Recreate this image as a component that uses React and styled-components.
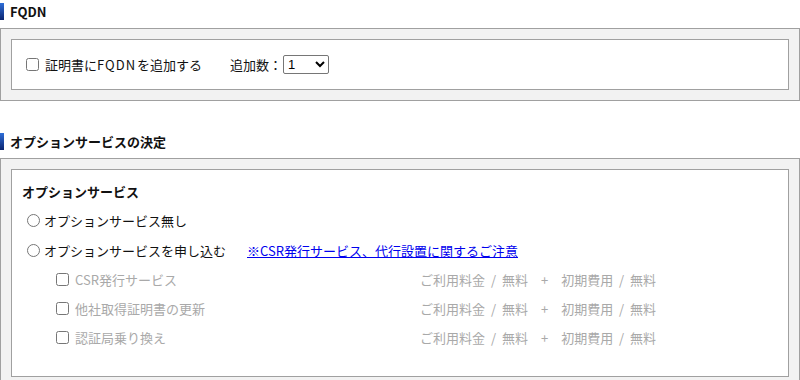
import styled, { createGlobalStyle } from 'styled-components'

const GlobalStyle = createGlobalStyle`
  body {
    margin: 0;
    background: #fff;
    font-family: "Noto Sans CJK JP", "Noto Sans", sans-serif;
    font-size: 13px;
    color: #111;
  }
`;

const fees = [
  'CSR発行サービス',
  '他社取得証明書の更新',
  '認証局乗り換え',
];

function App() {
  return (
    <Page>
      <GlobalStyle />
      <Section>
        <Heading>FQDN</Heading>
        <OuterBox>
          <InnerBox>
            <InlineRow>
              <CheckLabel>
                <Check type="checkbox" />
                <span>証明書に<Latin>FQDN</Latin>を追加する</span>
              </CheckLabel>
              <CountLabel>追加数：</CountLabel>
              <Select defaultValue="1">
                <option>1</option>
                <option>2</option>
                <option>3</option>
              </Select>
            </InlineRow>
          </InnerBox>
        </OuterBox>
      </Section>

      <Section $gap>
        <Heading>オプションサービスの決定</Heading>
        <OuterBox>
          <InnerBox $tall>
            <BoxTitle>オプションサービス</BoxTitle>
            <RadioRow>
              <Radio type="radio" name="opt" />オプションサービス無し
            </RadioRow>
            <RadioRow>
              <Radio type="radio" name="opt" />オプションサービスを申し込む
              <Notice href="#">※CSR発行サービス、代行設置に関するご注意</Notice>
            </RadioRow>
            {fees.map((name) => (
              <SubRow key={name}>
                <CheckLabel $width="368px">
                  <Check type="checkbox" />
                  <span>{name}</span>
                </CheckLabel>
                <Fee>ご利用料金 / 無料</Fee>
                <Plus>+</Plus>
                <Fee>初期費用 / 無料</Fee>
              </SubRow>
            ))}
          </InnerBox>
        </OuterBox>
      </Section>
    </Page>
  )
}

export default App

const Page = styled.div`
  width: 800px;
`;
const Section = styled.section`
  margin-top: ${(p) => (p.$gap ? '29px' : '0')};
`;
// blue gradient bar in front of each section title
const Heading = styled.h2`
  display: flex;
  align-items: center;
  gap: 6px;
  height: 28px;
  margin: 0;
  padding-bottom: 5px;
  box-sizing: border-box;
  font-size: 13px;
  font-weight: bold;
  line-height: 17px;
  color: #111;
  &::before {
    content: '';
    width: 4px;
    height: 17px;
    background: linear-gradient(#2e6ed8, #0a2470);
  }
`;
const OuterBox = styled.div`
  border: 1px solid #a0a0a0;
  background: #f2f2f2;
  padding: 10px;
`;
const InnerBox = styled.div`
  border: 1px solid #a0a0a0;
  background: #fff;
  padding: ${(p) => (p.$tall ? '12px 10px 24px' : '0 10px')};
  display: flex;
  flex-direction: column;
`;
const InlineRow = styled.div`
  display: flex;
  align-items: center;
  height: 49px;
`;
const CheckLabel = styled.label`
  display: flex;
  align-items: center;
  gap: 6px;
  width: ${(p) => p.$width || 'auto'};
  white-space: nowrap;
`;
const Latin = styled.span`
  letter-spacing: 1px;
  margin-right: 1px;
`;
const Check = styled.input`
  width: 13px;
  height: 13px;
  margin: 0 0 0 4px;
`;
const CountLabel = styled.span`
  margin-left: 28px;
`;
const Select = styled.select`
  width: 46px;
  height: 19px;
  margin-left: 1px;
  font-family: "Liberation Sans", Arial, sans-serif;
  font-size: 13px;
  border: 1px solid #767676;
  border-radius: 2px;
  background: #fff;
  color: #000;
`;
const BoxTitle = styled.div`
  font-weight: bold;
  line-height: 20px;
  margin-bottom: 3px;
`;
const RadioRow = styled.label`
  display: flex;
  align-items: center;
  height: 30px;
`;
const Radio = styled.input`
  width: 13px;
  height: 13px;
  margin: 0 4px 0 5px;
`;
const Notice = styled.a`
  margin-left: 21px;
  color: #0000ee;
  text-decoration: underline;
`;
const SubRow = styled.div`
  display: flex;
  align-items: center;
  height: 29px;
  padding-left: 30px;
  color: #a9a9a9;
`;
const Fee = styled.span`
  white-space: pre;
  word-spacing: 3px;
`;
const Plus = styled.span`
  padding: 0 13px;
`;
